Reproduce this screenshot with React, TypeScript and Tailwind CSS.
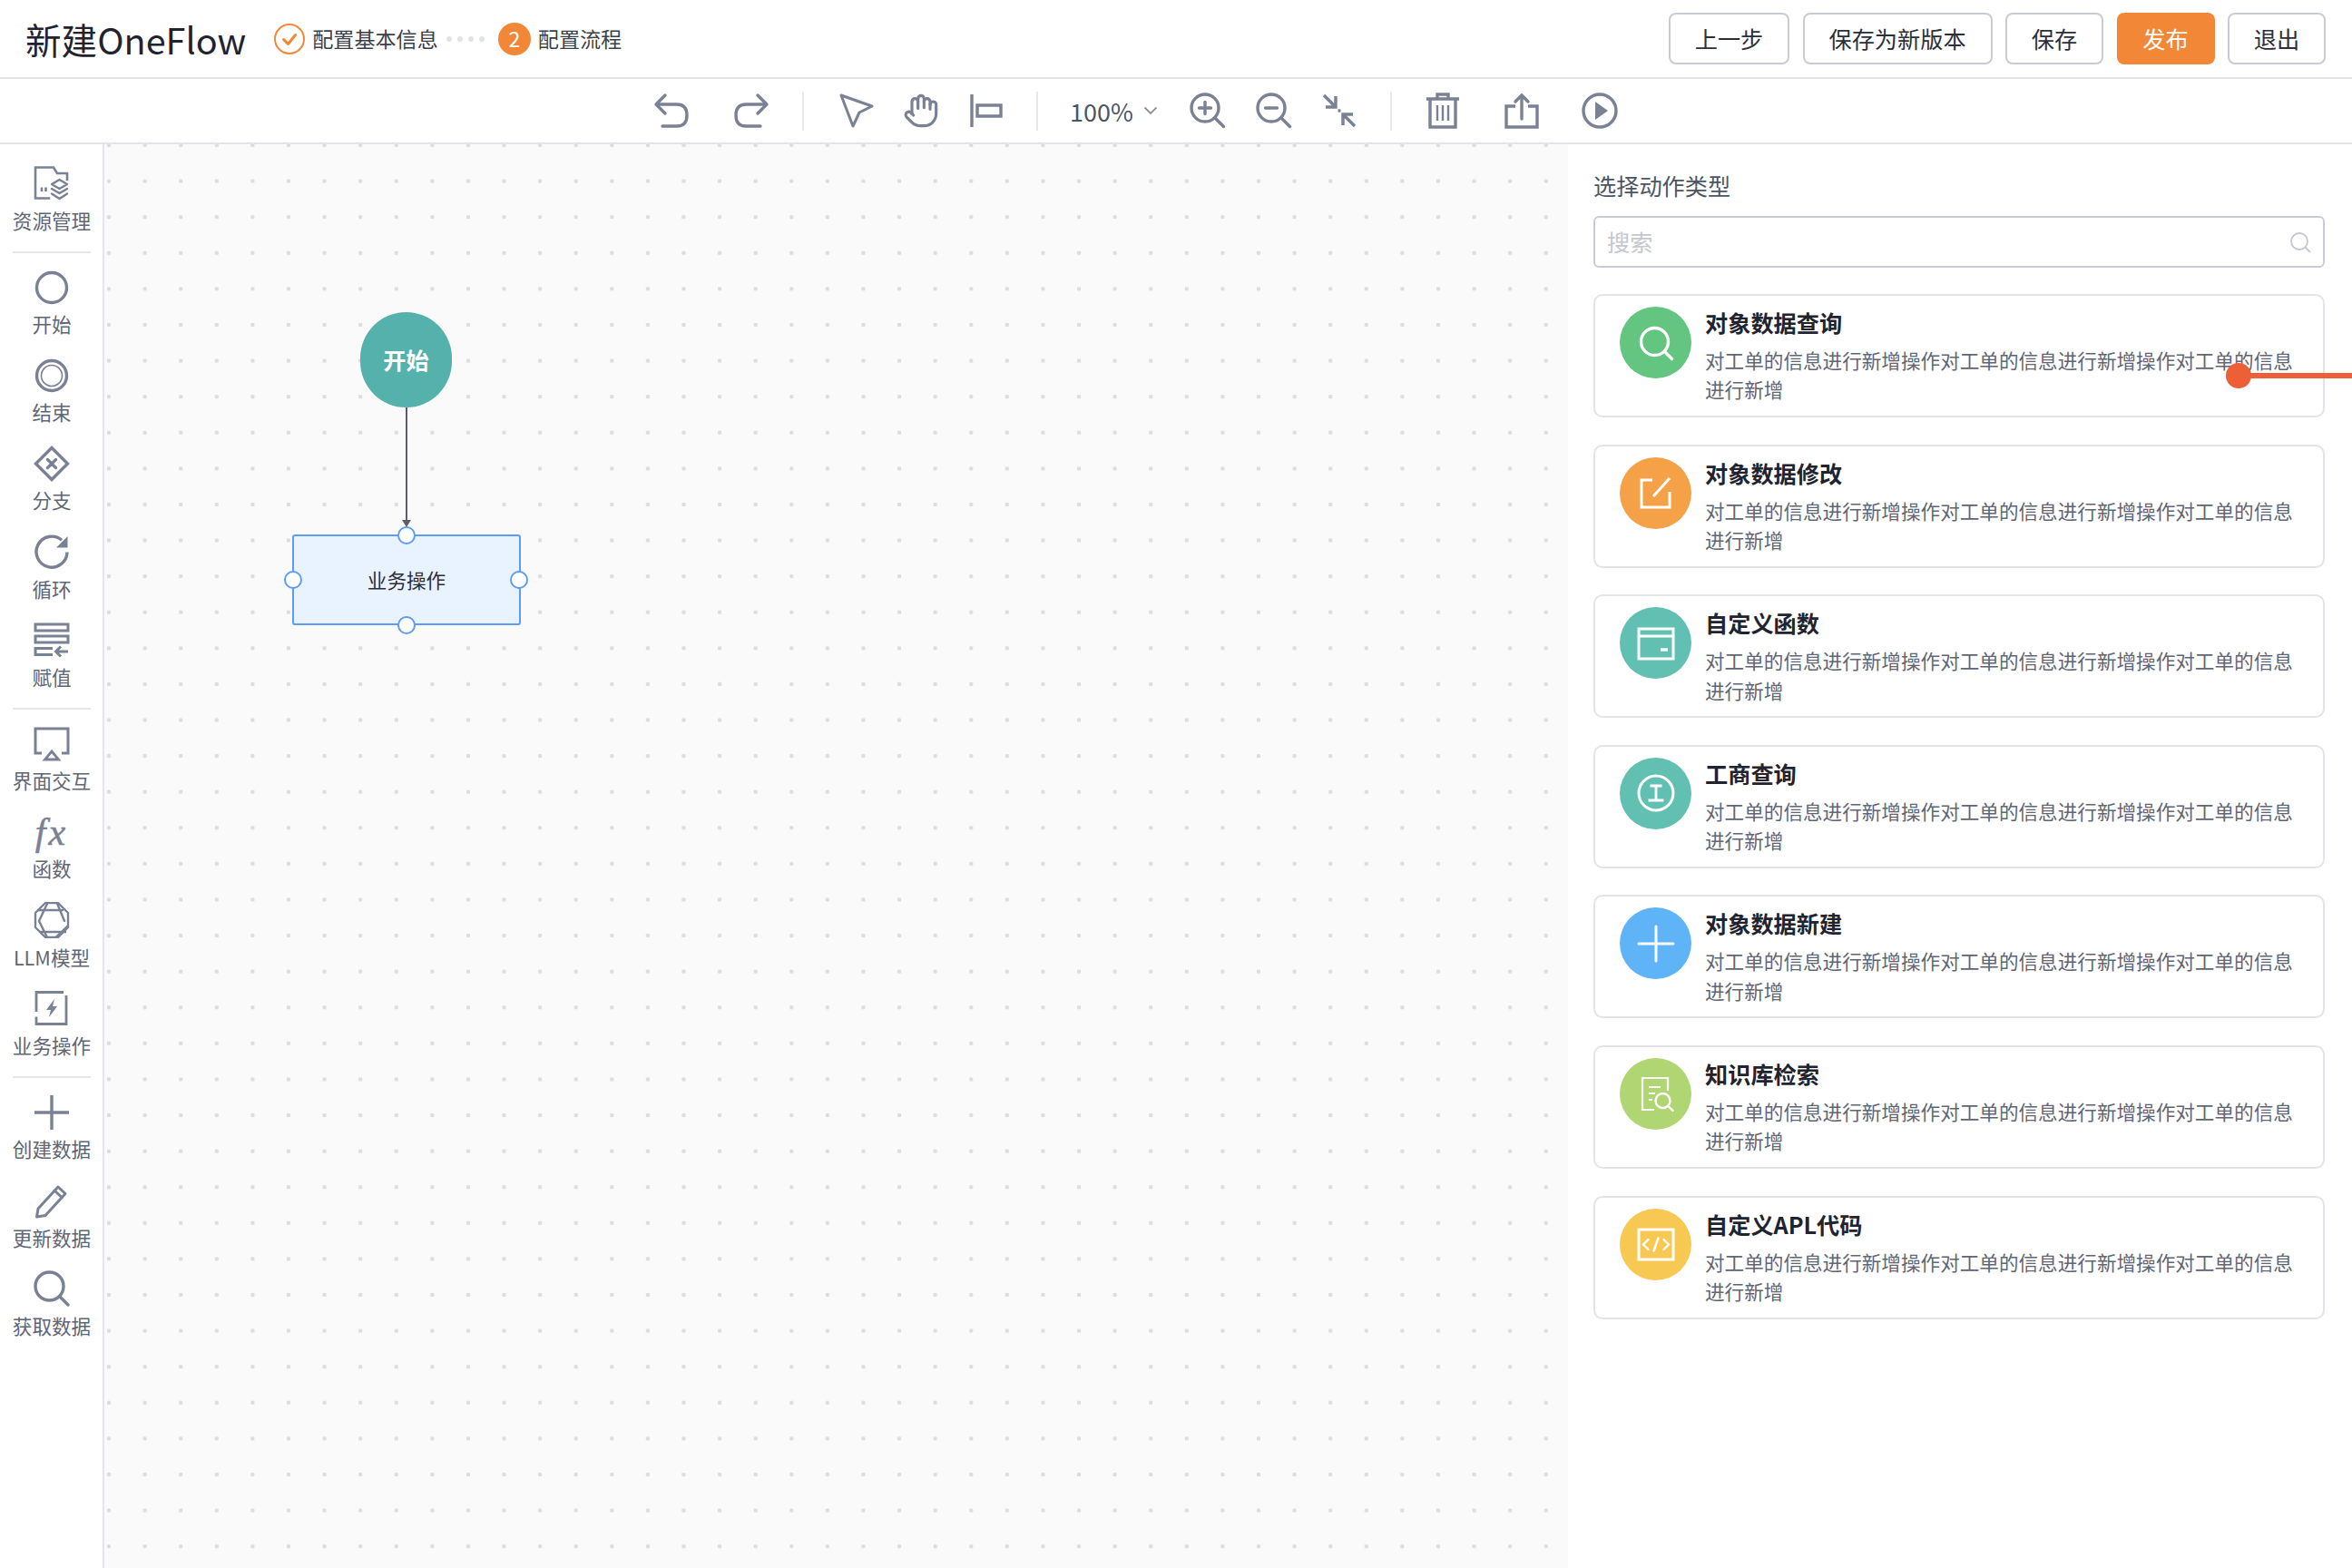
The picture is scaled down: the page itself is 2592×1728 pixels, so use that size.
import React from "react";
import { Hand } from "lucide-react";

const GRAY = "#7a8194";

const Svg = ({ children, size = 40 }: { children: React.ReactNode; size?: number }) => (
  <svg
    width={size}
    height={size}
    viewBox="0 0 40 40"
    fill="none"
    stroke={GRAY}
    strokeWidth={3.4}
    strokeLinecap="round"
    strokeLinejoin="round"
  >
    {children}
  </svg>
);

/* sidebar icons */
const FolderIcon = () => (
  <Svg>
    <path strokeWidth={2.6} strokeLinecap="square" strokeLinejoin="miter" d="M17 36.5H2V2.5h20l4 6.5h11v7" />
    <path strokeWidth={2.6} strokeLinecap="butt" d="M9 24.5v4.5M13.5 24.5v4.5" />
    <path strokeWidth={2.4} d="M28.5 16l8.5 5-8.5 5-8.5-5z" />
    <path strokeWidth={2.4} d="M20 26l8.5 5 8.5-5M20 31.5l8.5 5.5 8.5-5.5" />
  </Svg>
);
const StartIcon = () => (
  <Svg>
    <circle cx="20" cy="20" r="16.5" />
  </Svg>
);
const EndIcon = () => (
  <Svg>
    <circle cx="20" cy="20" r="16.5" />
    <circle cx="20" cy="20" r="11.5" strokeWidth={1.6} />
  </Svg>
);
const BranchIcon = () => (
  <Svg>
    <path strokeLinecap="butt" strokeLinejoin="miter" d="M20 2.5L37.5 20 20 37.5 2.5 20z" />
    <path strokeWidth={3.2} d="M15.5 15.5l9 9M24.5 15.5l-9 9" />
  </Svg>
);
const LoopIcon = () => (
  <Svg>
    <path strokeLinecap="butt" d="M37 20.5A17 17 0 1 1 31 7.2" />
    <path fill={GRAY} stroke="none" d="M37.5 3v12.5H25z" />
  </Svg>
);
const AssignIcon = () => (
  <Svg>
    <g strokeLinecap="butt" strokeLinejoin="miter" strokeWidth={3}>
      <rect x="2" y="3" width="36" height="7" />
      <rect x="2" y="16" width="36" height="7" />
      <path d="M21 29.5H2V36.5H21" />
      <path d="M38 33H25M30 27.5L24.5 33 30 38.5" />
    </g>
  </Svg>
);
const ScreenIcon = () => (
  <Svg>
    <path strokeLinecap="butt" strokeLinejoin="miter" strokeWidth={3} d="M9 30H2V3h36v27h-7" />
    <path strokeLinejoin="miter" strokeWidth={2.8} d="M20 28l7.5 9h-15z" />
  </Svg>
);
const LlmIcon = () => (
  <Svg>
    <g strokeWidth={2.4}>
      <path d="M13 1h14l11 11v16L27 39H13L2 28V12z" />
      <path d="M6 21L15 2M5 9h27M26 1.5L34 21M37 27L25 38.5M35 33H8M14.5 38L6 21" />
    </g>
  </Svg>
);
const BizIcon = () => (
  <Svg>
    <path strokeLinecap="butt" strokeLinejoin="miter" strokeWidth={2.8} d="M3 24V2.5h30M36 6v31.5H3v-8" />
    <path fill={GRAY} stroke="none" d="M23 10l-9 12h5l-2 8 9-12h-5z" />
  </Svg>
);
const PlusIcon = () => (
  <Svg>
    <path strokeLinecap="butt" d="M20 1v38M1 20h38" />
  </Svg>
);
const PencilIcon = () => (
  <Svg>
    <path strokeWidth={3} d="M5 29L27 5l8 7.5L13 36.5 3.5 38z" />
    <path strokeWidth={3} d="M23 9l8 7.5" />
  </Svg>
);
const SearchBigIcon = () => (
  <Svg>
    <circle cx="17.5" cy="17.5" r="15.5" />
    <path d="M29 29l9 9" />
  </Svg>
);

const groups = [
  [{ label: "资源管理", icon: <FolderIcon /> }],
  [
    { label: "开始", icon: <StartIcon /> },
    { label: "结束", icon: <EndIcon /> },
    { label: "分支", icon: <BranchIcon /> },
    { label: "循环", icon: <LoopIcon /> },
    { label: "赋值", icon: <AssignIcon /> },
  ],
  [
    { label: "界面交互", icon: <ScreenIcon /> },
    {
      label: "函数",
      icon: (
        <span className="font-['Liberation_Serif',serif] text-[42px] italic leading-[40px] tracking-[3px] text-[#7a8194] [-webkit-text-stroke:0.5px_#7a8194]">
          fx
        </span>
      ),
    },
    { label: "LLM模型", icon: <LlmIcon /> },
    { label: "业务操作", icon: <BizIcon /> },
  ],
  [
    { label: "创建数据", icon: <PlusIcon /> },
    { label: "更新数据", icon: <PencilIcon /> },
    { label: "获取数据", icon: <SearchBigIcon /> },
  ],
];

/* white glyphs in the cards */
const White = ({ children }: { children: React.ReactNode }) => (
  <svg
    width="44"
    height="44"
    viewBox="0 0 44 44"
    fill="none"
    stroke="#fff"
    strokeWidth={3}
    strokeLinecap="round"
    strokeLinejoin="miter"
  >
    {children}
  </svg>
);

const cards = [
  {
    title: "对象数据查询",
    color: "bg-[#64c581]",
    icon: (
      <White>
        <circle cx="20.5" cy="20.5" r="15" strokeWidth={3.4} />
        <path strokeWidth={3.4} d="M31.5 31.5l8 8" />
      </White>
    ),
  },
  {
    title: "对象数据修改",
    color: "bg-[#f4a147]",
    icon: (
      <White>
        <path strokeLinecap="butt" d="M18 8H6v30h31V21" />
        <path strokeLinecap="butt" d="M19 26L37 6" />
      </White>
    ),
  },
  {
    title: "自定义函数",
    color: "bg-[#62c0b2]",
    icon: (
      <White>
        <path strokeLinecap="butt" d="M3 6h38v33H3zM3 14h38" />
        <path strokeLinecap="butt" strokeWidth={3.4} d="M27 29h8" />
      </White>
    ),
  },
  {
    title: "工商查询",
    color: "bg-[#62c0b2]",
    icon: (
      <White>
        <circle cx="22" cy="22" r="19" />
        <path strokeWidth={2.8} strokeLinecap="butt" d="M15.5 14h13M22 14v16M13.5 30h17" />
      </White>
    ),
  },
  {
    title: "对象数据新建",
    color: "bg-[#5fb4f8]",
    icon: (
      <White>
        <path d="M22 3v38M3 22h38" />
      </White>
    ),
  },
  {
    title: "知识库检索",
    color: "bg-[#b0d673]",
    icon: (
      <White>
        <path strokeWidth={2.2} strokeLinecap="butt" d="M35 19V5H7v35h13" />
        <path strokeWidth={2.2} strokeLinecap="butt" d="M14 15h13M14 22h7M14 29h4" />
        <circle cx="29.5" cy="30" r="8" strokeWidth={2.4} />
        <path strokeWidth={2.4} d="M35.5 36l5 5" />
      </White>
    ),
  },
  {
    title: "自定义APL代码",
    color: "bg-[#f8c952]",
    icon: (
      <White>
        <path strokeLinecap="butt" d="M3 6h38v33H3z" />
        <path strokeWidth={2.4} strokeLinecap="round" d="M13.5 17L8 22.5l5.5 5.5M30.5 17l5.5 5.5-5.5 5.5M24.5 15.5l-5 14" />
      </White>
    ),
  },
];

const buttons = [
  { label: "上一步", width: "w-[133px]" },
  { label: "保存为新版本", width: "w-[209px]" },
  { label: "保存", width: "w-[108px]" },
  { label: "发布", width: "w-[108px]", primary: true },
  { label: "退出", width: "w-[108px]" },
];

const Sep = ({ className }: { className: string }) => <div className={`h-[43px] w-0.5 bg-[#e6e8ed] ${className}`} />;

const Handle = ({ className }: { className: string }) => (
  <div className={`absolute h-5 w-5 -translate-x-1/2 -translate-y-1/2 rounded-full border-2 border-[#5e9bf6] bg-white ${className}`} />
);

const App = () => {
  return (
    <div className="relative flex h-[1728px] w-[2592px] flex-col overflow-hidden bg-white font-['Noto_Sans_CJK_SC','Noto_Sans',sans-serif] text-[#1f2430]">
      {/* header */}
      <header className="flex h-[87px] shrink-0 items-center border-b-2 border-[#e2e4ea] pl-7 pr-[29px]">
        <h1 className="text-[39.6px] font-normal leading-none">新建OneFlow</h1>
        <svg className="ml-[31px]" width="34" height="34" viewBox="0 0 34 34" fill="none">
          <circle cx="17" cy="17" r="16" stroke="#f28737" strokeWidth="2" />
          <path d="M10.5 17.5l5 5 8-10" stroke="#f28737" strokeWidth="3" strokeLinecap="round" strokeLinejoin="round" />
        </svg>
        <span className="ml-2 text-[23.1px] text-[#3a3f4b]">配置基本信息</span>
        <div className="ml-[9px] flex gap-1.5">
          <i className="h-1.5 w-1.5 rounded-full bg-[#e1e3ea]" />
          <i className="h-1.5 w-1.5 rounded-full bg-[#e1e3ea]" />
          <i className="h-1.5 w-1.5 rounded-full bg-[#e1e3ea]" />
          <i className="h-1.5 w-1.5 rounded-full bg-[#e1e3ea]" />
        </div>
        <div className="ml-[15px] flex h-9 w-9 items-center justify-center rounded-full bg-[#f28737] text-[23.1px] text-white">
          2
        </div>
        <span className="ml-2 text-[23.1px] text-[#3a3f4b]">配置流程</span>
        <div className="ml-auto flex gap-[14.5px]">
          {buttons.map((b) => (
            <button
              key={b.label}
              className={`h-[57px] rounded-lg text-[25.2px] ${b.width} ${
                b.primary ? "bg-[#f28737] text-white" : "border-2 border-[#c9ccd6] bg-white text-[#2b2f3a]"
              }`}
            >
              {b.label}
            </button>
          ))}
        </div>
      </header>

      {/* toolbar */}
      <div className="flex h-[72px] shrink-0 items-center border-b-2 border-[#e2e4ea] pl-[720px]">
        <Svg>
          <path d="M13 3L3 13l10 10M3 13h23q11 0 11 12t-11 12H10" />
        </Svg>
        <div className="ml-[48px]">
          <Svg>
            <path d="M27 3l10 10-10 10M37 13H14Q3 13 3 25t11 12h16" />
          </Svg>
        </div>
        <Sep className="ml-9" />
        <div className="ml-[38px]">
          <Svg>
            <path strokeWidth={3} d="M3 3l34 12-14 7-7 15z" />
          </Svg>
        </div>
        <Hand className="ml-[31px]" size={40} color={GRAY} strokeWidth={1.9} />
        <div className="ml-[33px]">
          <Svg>
            <path strokeLinecap="butt" d="M3 2v36" />
            <path strokeLinecap="butt" strokeLinejoin="miter" d="M9 14h26v12H9z" />
          </Svg>
        </div>
        <Sep className="ml-[34px]" />
        <span className="ml-[35px] w-[76px] text-[27px] leading-none text-[#4b5563]">100%</span>
        <svg className="ml-[5px]" width="16" height="10" viewBox="0 0 16 10" fill="none" stroke="#8a8f9c" strokeWidth="1.8">
          <path d="M1.5 1.5L8 8l6.5-6.5" />
        </svg>
        <div className="ml-[35px]">
          <Svg>
            <circle cx="17" cy="17" r="15" />
            <path d="M28 28l9.5 9.5M17 10.5v13M10.5 17h13" />
          </Svg>
        </div>
        <div className="ml-[33px]">
          <Svg>
            <circle cx="17" cy="17" r="15" />
            <path d="M28 28l9.5 9.5M10.5 17h13" />
          </Svg>
        </div>
        <div className="ml-8">
          <Svg>
            <path strokeLinecap="butt" strokeLinejoin="miter" d="M3 3l12 12M16 4v12H5M37 37L25 25M24 36V24h11" />
            <path strokeLinecap="butt" d="M18.5 20h3" />
          </Svg>
        </div>
        <Sep className="ml-9" />
        <div className="ml-9">
          <Svg>
            <path strokeLinecap="butt" strokeLinejoin="miter" d="M2 7h36M14 7V2h12v5M6 7v31h28V7" />
            <path strokeLinecap="butt" strokeWidth={2.4} d="M14 14v17M20 14v17M26 14v17" />
          </Svg>
        </div>
        <div className="ml-[47px]">
          <Svg>
            <path strokeLinecap="butt" strokeLinejoin="miter" d="M13 15H3v23h34V15H27" />
            <path strokeLinejoin="miter" d="M20 29V3M13 10l7-7 7 7" />
          </Svg>
        </div>
        <div className="ml-[46px]">
          <Svg>
            <circle cx="20" cy="20" r="18" />
            <path fill={GRAY} stroke="none" d="M15 10l14 10-14 10z" />
          </Svg>
        </div>
      </div>

      <div className="flex min-h-0 flex-1">
        {/* sidebar */}
        <aside className="flex w-[115px] shrink-0 flex-col items-center border-r-2 border-[#e4e6ec] pl-px pt-[23px]">
          {groups.map((group, i) => (
            <div key={i} className="flex w-full flex-col items-center">
              {i > 0 && <div className="mb-[18px] mt-[19px] h-0.5 w-[86px] bg-[#e4e6ec]" />}
              <div className="flex flex-col gap-[21.7px]">
                {group.map((item) => (
                  <div key={item.label} className="flex flex-col items-center gap-[5.5px]">
                    <div className="flex h-10 w-10 items-center justify-center">{item.icon}</div>
                    <span className="whitespace-nowrap text-[21.6px] leading-[30px] text-[#5f6675]">{item.label}</span>
                  </div>
                ))}
              </div>
            </div>
          ))}
        </aside>

        {/* canvas */}
        <main className="relative flex-1 bg-[#fafafa] bg-[radial-gradient(circle,#dddddd_2px,transparent_2.6px)] [background-position:-14.8px_-18.8px] [background-size:39.6px_39.6px]">
          <div className="absolute left-[282px] top-[185px] flex h-[105px] w-[101px] items-center justify-center rounded-full bg-[#54b1ab] text-[25.2px] font-bold text-white">
            开始
          </div>
          <div className="absolute left-[331.5px] top-[290px] h-[125px] w-0.5 bg-[#5c5f68]" />
          <svg className="absolute left-[327.5px] top-[414px]" width="10" height="8" viewBox="0 0 10 8">
            <path d="M0 0h10L5 8z" fill="#5c5f68" />
          </svg>
          <div className="absolute left-[207px] top-[430px] flex h-[100px] w-[252px] items-center justify-center rounded-[3px] border-2 border-[#5e9bf6] bg-[#e8f3ff] text-[21.6px] text-[#2b2f3a]">
            业务操作
          </div>
          <Handle className="left-[332.5px] top-[431px]" />
          <Handle className="left-[332.5px] top-[530px]" />
          <Handle className="left-[208px] top-[480px]" />
          <Handle className="left-[457px] top-[480px]" />
        </main>

        {/* right panel */}
        <section className="w-[864px] shrink-0 bg-white pl-7 pr-[30px] pt-[27px]">
          <h2 className="text-[25.2px] font-normal leading-9 text-[#4b5563]">选择动作类型</h2>
          <div className="mt-4 flex h-[57px] items-center justify-between rounded-md border-2 border-[#c9ccd6] pl-[13px] pr-[13px]">
            <span className="text-[25.2px] text-[#c4c7d0]">搜索</span>
            <svg width="24" height="24" viewBox="0 0 24 24" fill="none" stroke="#c4c7d0" strokeWidth="1.8" strokeLinecap="round">
              <circle cx="11" cy="11" r="9" />
              <path d="M18 18l4.5 4.5" />
            </svg>
          </div>
          <div className="mt-[29px] flex flex-col gap-[29.6px]">
            {cards.map((c) => (
              <div key={c.title} className="flex h-[136px] gap-[15px] rounded-[10px] border-2 border-[#e2e4ea] pl-[27px] pr-[28px] pt-3">
                <div className={`flex h-[79px] w-[79px] shrink-0 items-center justify-center rounded-full ${c.color}`}>
                  {c.icon}
                </div>
                <div className="min-w-0">
                  <h3 className="-mt-px text-[25.2px] font-bold leading-9 text-[#1f2430]">{c.title}</h3>
                  <p className="mt-2 text-[21.6px] leading-[32.4px] text-[#5f6675]">
                    对工单的信息进行新增操作对工单的信息进行新增操作对工单的信息进行新增
                  </p>
                </div>
              </div>
            ))}
          </div>
        </section>
      </div>

      {/* red marker over the first card */}
      <div className="absolute left-[2453px] top-[400px] h-7 w-7 rounded-full bg-[#ec5f37]" />
      <div className="absolute left-[2470px] top-[411px] h-[6px] w-[122px] bg-[#ec5f37]" />
    </div>
  );
};

export default App;
